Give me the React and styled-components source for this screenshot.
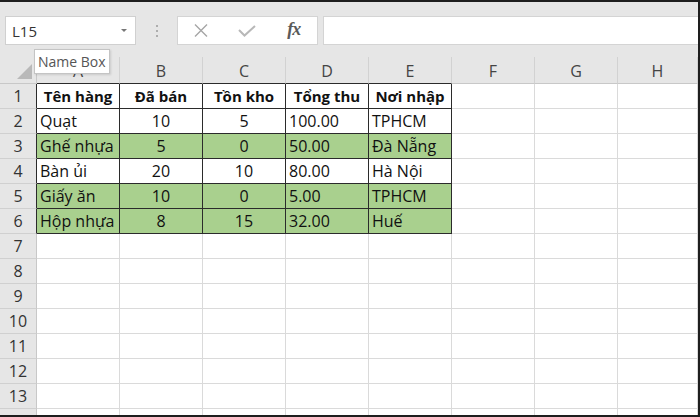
import React from "react";
import styled, { createGlobalStyle } from "styled-components";

const GlobalStyle = createGlobalStyle`
  html, body {
    margin: 0;
    padding: 0;
    background: #fff;
  }
  body {
    font-family: "Open Sans", "Noto Sans", sans-serif;
  }
`;

const Frame = styled.div`
  position: relative;
  width: 700px;
  height: 417px;
  box-sizing: border-box;
  border-top: 2px solid #1e1e1e;
  border-right: 2px solid #1e1e1e;
  border-bottom: 2px solid #1e1e1e;
  background: #e6e6e6;
  overflow: hidden;
  display: flex;
  flex-direction: column;
`;

const Toolbar = styled.div`
  height: 55px;
  flex: none;
  box-sizing: border-box;
  padding: 14px 0 0 5px;
  display: flex;
  align-items: flex-start;
`;

const NameBox = styled.div`
  width: 131px;
  height: 29px;
  box-sizing: border-box;
  background: #fff;
  border: 1px solid #d0d0d0;
  display: flex;
  align-items: center;
  justify-content: space-between;
  padding: 0 8px 0 6px;
  font-size: 15px;
  color: #333;
`;

const Caret = styled.span`
  width: 0;
  height: 0;
  border-left: 3px solid transparent;
  border-right: 3px solid transparent;
  border-top: 3px solid #777;
`;

const Grip = styled.div`
  width: 41px;
  height: 29px;
  display: flex;
  flex-direction: column;
  align-items: center;
  justify-content: center;
  gap: 3px;
  span {
    width: 2px;
    height: 2px;
    border-radius: 1px;
    background: #9a9a9a;
  }
`;

const FxBox = styled.div`
  width: 141px;
  height: 29px;
  box-sizing: border-box;
  background: #fff;
  border: 1px solid #d4d4d4;
  display: grid;
  grid-template-columns: repeat(3, 1fr);
  align-items: center;
  justify-items: center;
`;

const FxLabel = styled.span`
  font-family: "Liberation Serif", "DejaVu Serif", serif;
  font-style: italic;
  font-weight: bold;
  font-size: 18px;
  color: #5a5a5a;
  letter-spacing: -1px;
  margin-top: -2px;
`;

const FormulaInput = styled.div`
  flex: 1;
  margin-left: 5px;
  height: 29px;
  box-sizing: border-box;
  background: #fff;
  border: 1px solid #d4d4d4;
  border-right: none;
`;

const Sheet = styled.div`
  display: grid;
  grid-template-columns: 37px repeat(7, 83px) 1fr;
  grid-template-rows: 27px;
  grid-auto-rows: 25px;
  background: #fff;
`;

const Corner = styled.div`
  background: #e6e6e6;
  box-sizing: border-box;
  border-right: 1px solid #c8c8c8;
  border-bottom: 1px solid #c8c8c8;
  display: flex;
  align-items: flex-end;
  justify-content: flex-end;
  padding: 0 4px 4px 0;
  &::after {
    content: "";
    width: 0;
    height: 0;
    border-left: 15px solid transparent;
    border-bottom: 15px solid #b9b9b9;
  }
`;

const ColHead = styled.div`
  background: #e6e6e6;
  box-sizing: border-box;
  border-right: 1px solid #d2d2d2;
  border-bottom: 1px solid ${(p) => (p.$dark ? "#2b2b2b" : "#c8c8c8")};
  display: flex;
  align-items: center;
  justify-content: center;
  font-size: 16px;
  color: #444;
  padding-top: 2px;
`;

const RowHead = styled.div`
  background: #e6e6e6;
  box-sizing: border-box;
  border-right: 1px solid ${(p) => (p.$dark ? "#2b2b2b" : "#c8c8c8")};
  border-bottom: 1px solid #d0d0d0;
  display: flex;
  align-items: center;
  justify-content: center;
  font-size: 16px;
  color: #333;
`;

const Cell = styled.div`
  box-sizing: border-box;
  background: ${(p) => (p.$fill ? "#a9d08e" : "#fff")};
  border-right: 1px solid ${(p) => (p.$dark ? "#2b2b2b" : "#dadada")};
  border-bottom: 1px solid ${(p) => (p.$dark ? "#2b2b2b" : "#dadada")};
  display: flex;
  align-items: center;
  justify-content: ${(p) => p.$align || "flex-start"};
  padding: 0 3px;
  font-size: ${(p) => (p.$bold ? "15px" : "16px")};
  font-weight: ${(p) => (p.$bold ? 700 : 400)};
  color: #111;
  white-space: nowrap;
  overflow: hidden;
`;

const Tooltip = styled.div`
  position: absolute;
  left: 34px;
  top: 47px;
  height: 25px;
  padding: 0 3px;
  box-sizing: border-box;
  background: #fff;
  border: 1px solid #c4c4c4;
  box-shadow: 1px 1px 2px rgba(0, 0, 0, 0.12);
  display: flex;
  align-items: center;
  font-size: 14px;
  color: #555;
`;

const columns = ["A", "B", "C", "D", "E", "F", "G", "H"];
const aligns = ["flex-start", "center", "center", "flex-start", "flex-start"];

const data = [
  { cells: ["Tên hàng", "Đã bán", "Tồn kho", "Tổng thu", "Nơi nhập"], bold: true },
  { cells: ["Quạt", "10", "5", "100.00", "TPHCM"] },
  { cells: ["Ghế nhựa", "5", "0", "50.00", "Đà Nẵng"], fill: true },
  { cells: ["Bàn ủi", "20", "10", "80.00", "Hà Nội"] },
  { cells: ["Giấy ăn", "10", "0", "5.00", "TPHCM"], fill: true },
  { cells: ["Hộp nhựa", "8", "15", "32.00", "Huế"], fill: true },
];

// 13 numbered rows are visible, the 14th only peeks in at the bottom edge
const LABELLED_ROWS = 13;
const TOTAL_ROWS = 14;

function CrossIcon() {
  return (
    <svg width="14" height="13" viewBox="0 0 14 13">
      <path d="M1 0.5 L13 12.5 M13 0.5 L1 12.5" stroke="#a6a6a6" strokeWidth="1.4" fill="none" />
    </svg>
  );
}

function CheckIcon() {
  return (
    <svg width="18" height="12" viewBox="0 0 18 12">
      <path d="M1 5 L6.5 10.5 L17 1" stroke="#b8b8b8" strokeWidth="2" fill="none" />
    </svg>
  );
}

export default function App() {
  const rows = [];
  for (let r = 0; r < TOTAL_ROWS; r++) {
    const row = data[r];
    rows.push(
      <RowHead key={`rh${r}`} $dark={!!row}>
        {r < LABELLED_ROWS ? r + 1 : null}
      </RowHead>
    );
    columns.forEach((c, ci) => {
      if (row && ci < 5) {
        rows.push(
          <Cell
            key={`c${r}-${ci}`}
            $dark
            $fill={row.fill}
            $bold={row.bold}
            $align={row.bold ? "center" : aligns[ci]}
          >
            {row.cells[ci]}
          </Cell>
        );
      } else {
        rows.push(<Cell key={`c${r}-${ci}`} />);
      }
    });
  }

  return (
    <>
      <GlobalStyle />
      <Frame>
        <Toolbar>
          <NameBox>
            L15
            <Caret />
          </NameBox>
          <Grip>
            <span />
            <span />
            <span />
          </Grip>
          <FxBox>
            <CrossIcon />
            <CheckIcon />
            <FxLabel>fx</FxLabel>
          </FxBox>
          <FormulaInput />
        </Toolbar>
        <Sheet>
          <Corner />
          {columns.map((c, i) => (
            <ColHead key={`h${i}`} $dark={i < 5}>
              {c}
            </ColHead>
          ))}
          {rows}
        </Sheet>
        <Tooltip>Name Box</Tooltip>
      </Frame>
    </>
  );
}
